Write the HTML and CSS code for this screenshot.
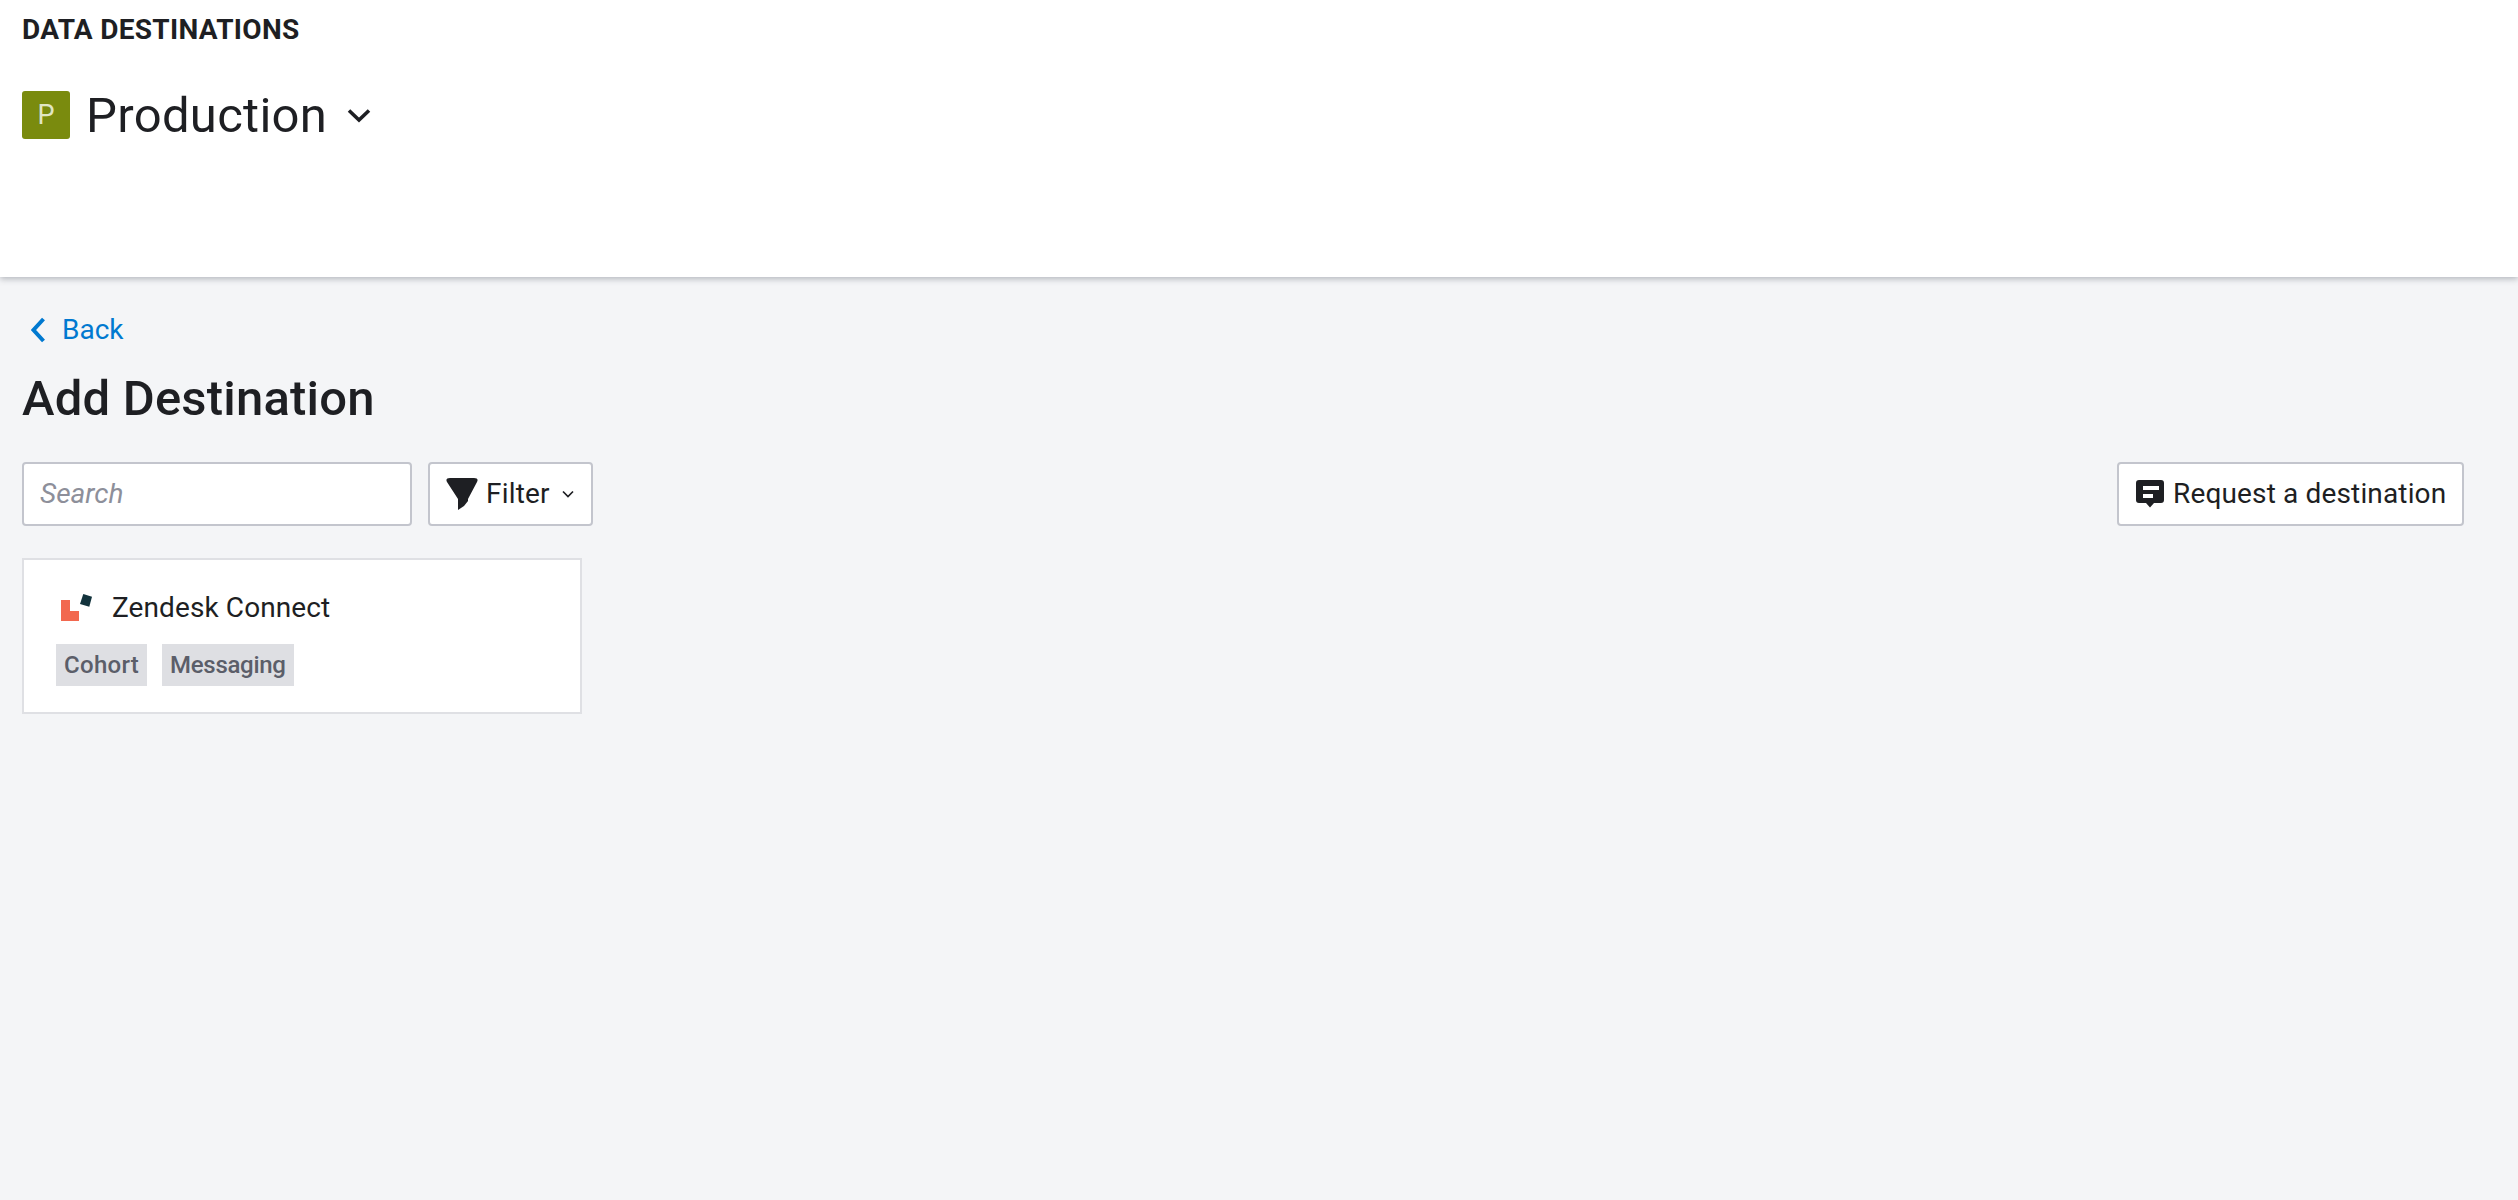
FILE: index.html

```html
<!DOCTYPE html>
<html lang="en">
<head>
  <meta charset="UTF-8" />
  <title>Data Destinations</title>
  <link rel="stylesheet" href="styles.css">
</head>
<body>
  <header class="top-bar">
    <div class="section-label">DATA DESTINATIONS</div>
    <div class="env-row">
      <span class="env-badge">P</span>
      <span class="env-name">Production</span>
      <svg class="env-caret" width="24" height="15" viewBox="0 0 24 15"><path d="M2 2.5 L12 12 L22 2.5" fill="none" stroke="#1e1f23" stroke-width="3.6"/></svg>
    </div>
  </header>

  <main class="content">
    <a class="back-link" href="#">
      <svg width="14" height="26" viewBox="0 0 14 26"><path d="M12.500 2 L2.500 13 L12.500 24" fill="none" stroke="#0079d0" stroke-width="4"/></svg>
      <span>Back</span>
    </a>
    <h1 class="page-title">Add Destination</h1>

    <div class="toolbar">
      <input class="search-input" type="text" placeholder="Search" />
      <button class="btn filter-btn">
        <svg width="32" height="32" viewBox="0 0 32 32"><path d="M4 0 H28 Q33 0 31 4 L22 21 V23 L18 28 L12 32 V21 L1 4 Q-1 0 4 0 Z" fill="#1e1f23"/></svg>
        <span>Filter</span>
        <svg class="filter-caret" width="12" height="8" viewBox="0 0 12 8"><path d="M1 1.500 L6 6.500 L11 1.500" fill="none" stroke="#1e1f23" stroke-width="1.7"/></svg>
      </button>
      <button class="btn request-btn">
        <svg width="28" height="28" viewBox="0 0 28 28"><path fill-rule="evenodd" d="M3 0 H25 Q28 0 28 3 V20 Q28 23 25 23 H18 L14 27.500 L10 23 H3 Q0 23 0 20 V3 Q0 0 3 0 Z M7 6 V10 H23 V6 Z M7 14 V18 H17 V14 Z" fill="#1e1f23"/></svg>
        <span>Request a destination</span>
      </button>
    </div>

    <div class="dest-grid">
      <div class="dest-card">
        <div class="dest-head">
          <svg class="dest-logo" width="31" height="27" viewBox="0 0 31 27"><path d="M0 6 H9 V17 H18 V27 H0 Z" fill="#f2684f"/><path d="M22.300 0 L31 2.700 L28.300 12.700 L19 10 Z" fill="#12333c"/></svg>
          <span class="dest-name">Zendesk Connect</span>
        </div>
        <div class="tag-row">
          <span class="tag tag-cohort">Cohort</span>
          <span class="tag tag-messaging">Messaging</span>
        </div>
      </div>
    </div>
  </main>
</body>
</html>
```

FILE: styles.css

```css
* { box-sizing: border-box; }
html, body { height: 100%; }
body { margin: 0; font-family: 'Roboto', 'Liberation Sans', sans-serif; color: #1e1f23; background: #f4f5f7; overflow: hidden; }

.top-bar { height: 277px; background: #fff; padding: 16px 22px 0; box-shadow: 0 2px 6px rgba(60, 65, 80, .35); }
.section-label { font-size: 28px; line-height: 28px; font-weight: 700; letter-spacing: .3px; }
.env-row { display: flex; align-items: center; margin-top: 46px; }
.env-badge { width: 48px; height: 48px; border-radius: 3px; background: #7a8b0e; color: #e0e6c4; font-size: 27px; display: flex; align-items: center; justify-content: center; }
.env-name { margin: 2px 0 0 16px; font-size: 49px; line-height: 48px; font-weight: 400; letter-spacing: .3px; }
.env-caret { margin-left: 20px; margin-top: 1px; }

.content { padding: 0 54px 0 22px; }
.back-link { display: flex; align-items: center; gap: 17px; margin: 39px 0 0 9px; color: #0079d0; font-size: 28px; line-height: 28px; text-decoration: none; }
.page-title { margin: 29px 0 0; font-size: 49px; line-height: 52px; font-weight: 500; letter-spacing: .2px; }

.toolbar { display: flex; align-items: stretch; margin-top: 37px; height: 64px; }
.search-input { width: 390px; border: 2px solid #c3c5cd; border-radius: 4px; background: #fff; padding: 0 16px 2px; font-family: inherit; font-size: 28px; color: #1e1f23; }
.search-input::placeholder { color: #8d8f9a; font-style: italic; opacity: 1; }
.btn { display: flex; align-items: center; background: #fff; border: 2px solid #c3c5cd; border-radius: 4px; font-family: inherit; font-size: 28px; color: #1e1f23; padding: 0 0 1px; }
.filter-btn { width: 165px; margin-left: 16px; padding-left: 16px; gap: 8px; letter-spacing: .2px; }
.filter-btn svg { flex: none; }
.filter-caret { margin-left: 4px; }
.request-btn { width: 347px; margin-left: auto; padding-left: 17px; gap: 9px; letter-spacing: .15px; }

.dest-grid { display: flex; margin-top: 32px; }
.dest-card { width: 560px; height: 156px; background: #fff; border: 2px solid #dfe0e4; padding: 34px 32px 0; }
.dest-head { display: flex; align-items: flex-start; height: 30px; }
.dest-logo { margin-left: 5px; }
.dest-name { margin: -1px 0 0 20px; font-size: 28px; line-height: 30px; letter-spacing: .1px; }
.tag-row { display: flex; gap: 15px; margin-top: 20px; }
.tag { height: 42px; padding: 0 8px; background: #dedfe3; color: #5b5e69; font-size: 24px; font-weight: 500; display: flex; align-items: center; }
.tag-cohort { letter-spacing: .3px; }
.tag-messaging { letter-spacing: -.3px; }
```
